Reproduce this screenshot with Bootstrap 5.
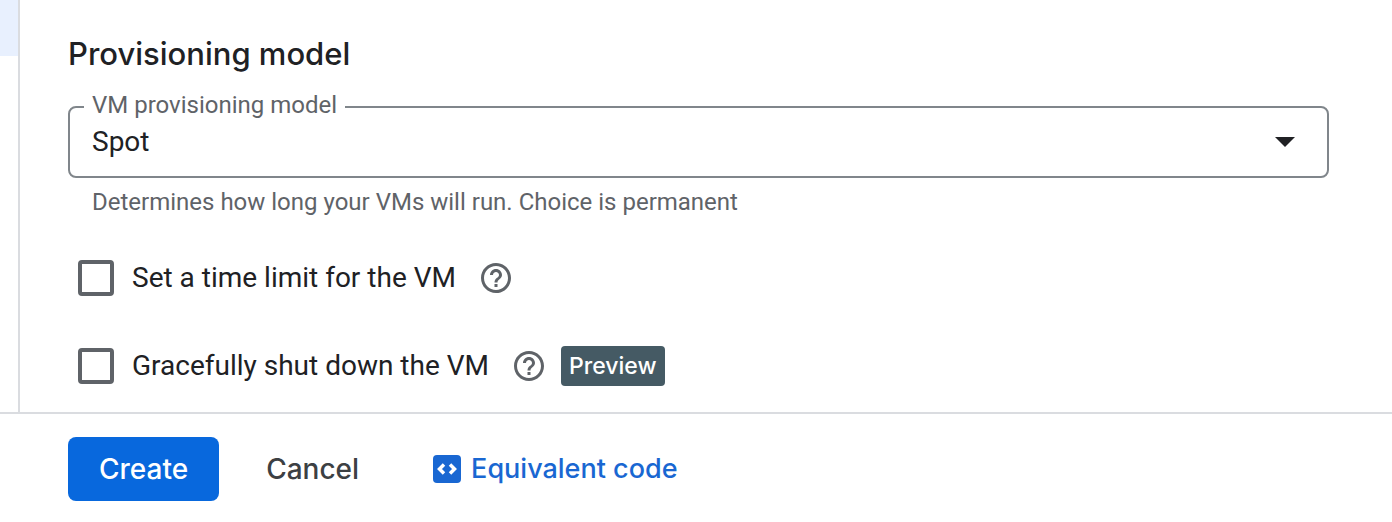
<!DOCTYPE html>
<html lang="en">
<head>
<meta charset="utf-8">
<meta name="viewport" content="width=device-width, initial-scale=1">
<title>Provisioning model</title>
<link href="https://cdn.jsdelivr.net/npm/bootstrap@5.3.0/dist/css/bootstrap.min.css" rel="stylesheet">
<style>
  body { font-family: Roboto, "Liberation Sans", sans-serif; font-size: 28px; line-height: 40px; color: #202124; background: #fff; }
  .display-face { font-family: "Google Sans", Inter, Roboto, sans-serif; font-weight: 500; }
  .side-rail { width: 20px; border-right: 2px solid #dadce0; }
  .side-active { height: 56px; background: #e8f0fe; }
  .panel { padding: 34px 63px 26px 48px; }
  .section-title { font-size: 31px; line-height: 40px; margin-bottom: 32px; }
  .model-field .form-select {
    height: 72px; padding: 0 72px 0 22px; border: 2px solid #80868b; border-radius: 8px;
    font-size: 28px; line-height: 40px; color: #202124;
    background-image: url("data:image/svg+xml,%3Csvg xmlns='http://www.w3.org/2000/svg' viewBox='0 0 20 10'%3E%3Cpath d='M0 0h20L10 10z' fill='%23202124'/%3E%3C/svg%3E");
    background-size: 20px 10px; background-position: right 32px center;
  }
  .model-label { top: -17px; left: 16px; padding: 0 8px; font-size: 24px; line-height: 32px; color: #5f6368; background: #fff; }
  .hint { font-size: 24px; line-height: 32px; color: #5f6368; margin: 8px 0 40px 24px; }
  .option-list { gap: 48px; }
  .option .form-check-input { width: 36px; height: 36px; margin: 0 18px 0 10px; border: 4px solid #5f6368; border-radius: 4px; }
  .help-btn { margin-left: 25px; color: #5f6368; }
  .preview-tag { margin-left: 17px; padding: 8px; border-radius: 4px; font-size: 23px; line-height: 24px; background: #455a64; }
  .action-bar { padding: 23px 63px 21px 68px; border-top: 2px solid #dadce0; }
  .action-bar .btn { font-size: 28px; line-height: 40px; font-weight: 500; padding: 12px 31px; border: 0; border-radius: 8px; }
  .create-btn { background: #0868dd; }
  .cancel-btn { color: #3c4043; margin-left: 16px; }
  .code-link { font-size: 27px; color: #1967d2; gap: 10px; margin-left: 43px; }
</style>
</head>
<body>
<div class="d-flex flex-column min-vh-100">
  <div class="d-flex flex-grow-1">
    <aside class="side-rail flex-shrink-0"><div class="side-active"></div></aside>
    <main class="panel flex-grow-1">
      <h2 class="section-title display-face">Provisioning model</h2>
      <div class="model-field position-relative">
        <select class="form-select" id="model" aria-describedby="modelHint">
          <option selected>Spot</option>
        </select>
        <label class="model-label position-absolute" for="model">VM provisioning model</label>
      </div>
      <p class="hint" id="modelHint">Determines how long your VMs will run. Choice is permanent</p>
      <div class="option-list d-flex flex-column">
        <div class="option d-flex align-items-center">
          <input class="form-check-input flex-shrink-0" type="checkbox" id="limit">
          <label for="limit">Set a time limit for the VM</label>
          <button type="button" class="help-btn btn p-0 border-0 d-flex" aria-label="Help on time limit">
            <svg width="30" height="30" viewBox="2 2 20 20" fill="currentColor" aria-hidden="true"><path d="M11 18h2v-2h-2v2zm1-16C6.480 2 2 6.480 2 12s4.480 10 10 10 10-4.480 10-10S17.520 2 12 2zm0 18c-4.410 0-8-3.590-8-8s3.590-8 8-8 8 3.590 8 8-3.590 8-8 8zm0-14c-2.210 0-4 1.790-4 4h2c0-1.100.9-2 2-2s2 .9 2 2c0 2-3 1.750-3 5h2c0-2.250 3-2.500 3-5 0-2.210-1.790-4-4-4z"/></svg>
          </button>
        </div>
        <div class="option d-flex align-items-center">
          <input class="form-check-input flex-shrink-0" type="checkbox" id="graceful">
          <label for="graceful">Gracefully shut down the VM</label>
          <button type="button" class="help-btn btn p-0 border-0 d-flex" aria-label="Help on graceful shutdown">
            <svg width="30" height="30" viewBox="2 2 20 20" fill="currentColor" aria-hidden="true"><path d="M11 18h2v-2h-2v2zm1-16C6.480 2 2 6.480 2 12s4.480 10 10 10 10-4.480 10-10S17.520 2 12 2zm0 18c-4.410 0-8-3.590-8-8s3.590-8 8-8 8 3.590 8 8-3.590 8-8 8zm0-14c-2.210 0-4 1.790-4 4h2c0-1.100.9-2 2-2s2 .9 2 2c0 2-3 1.750-3 5h2c0-2.250 3-2.500 3-5 0-2.210-1.790-4-4-4z"/></svg>
          </button>
          <span class="preview-tag display-face text-white">Preview</span>
        </div>
      </div>
    </main>
  </div>
  <footer class="action-bar d-flex align-items-center">
    <button type="button" class="create-btn btn btn-primary display-face">Create</button>
    <button type="button" class="cancel-btn btn display-face">Cancel</button>
    <a href="#" class="code-link display-face d-flex align-items-center text-decoration-none">
      <svg width="28" height="28" viewBox="0 0 28 28" aria-hidden="true"><rect width="28" height="28" rx="4" fill="#1967d2"/><path d="M11 9.500 6.500 14l4.500 4.500M17 9.500l4.500 4.500-4.500 4.500" fill="none" stroke="#fff" stroke-width="3.500"/></svg>
      Equivalent code
    </a>
  </footer>
</div>
<script src="https://cdn.jsdelivr.net/npm/bootstrap@5.3.0/dist/js/bootstrap.bundle.min.js"></script>
</body>
</html>
